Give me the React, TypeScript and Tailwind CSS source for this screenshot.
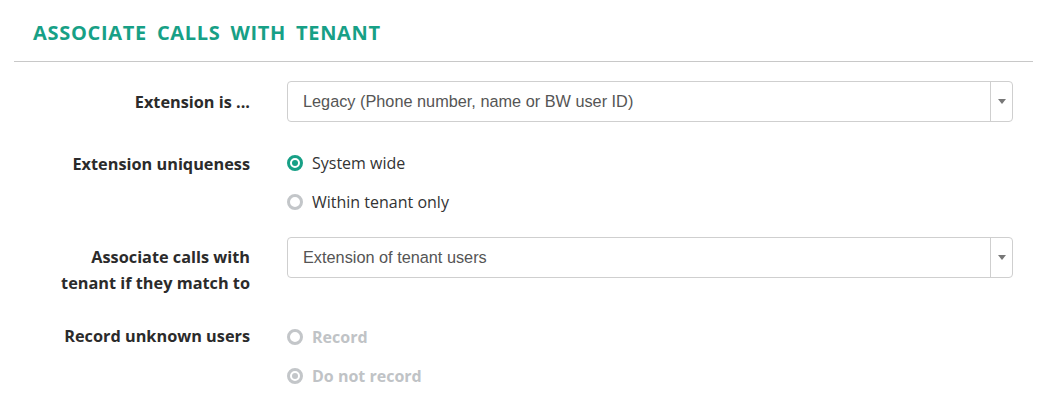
import React from 'react'

const TEAL = '#17a086'

function Radio({ checked, disabled, label }: { checked?: boolean; disabled?: boolean; label: string }) {
  const ring = disabled ? 'border-[#c3c6c9]' : checked ? 'border-[#17a086]' : 'border-[#c3c6c9]'
  return (
    <label className="flex h-6 items-center gap-[9px]">
      <span className={`flex h-4 w-4 items-center justify-center rounded-full border-[3px] bg-white ${ring}`}>
        {checked && (
          <span className={`h-[6px] w-[6px] rounded-full ${disabled ? 'bg-[#c3c6c9]' : 'bg-[#17a086]'}`} />
        )}
      </span>
      <span
        className={
          disabled
            ? 'text-[16px] font-bold text-[#c0c3c6]'
            : 'text-[16px] text-[#333]'
        }
      >
        {label}
      </span>
    </label>
  )
}

function Select({ value }: { value: string }) {
  return (
    <div className="flex h-[41px] shrink-0 items-stretch rounded-[4px] border border-[#cfcfcf] bg-white">
      <div className="flex flex-1 items-center pl-[15px] font-['Liberation_Sans',Arial,sans-serif] text-[16.3px] text-[#555]">
        {value}
      </div>
      <div className="flex w-[22px] items-center justify-center border-l border-[#cfcfcf]">
        <span className="h-0 w-0 border-x-[4px] border-t-[5px] border-x-transparent border-t-[#777]" />
      </div>
    </div>
  )
}

function Row({
  label,
  children,
  className,
  labelClass,
}: {
  label: React.ReactNode
  children: React.ReactNode
  className?: string
  labelClass?: string
}) {
  return (
    <div className={`flex ${className ?? ''}`}>
      <div
        className={`w-[236px] shrink-0 text-right text-[16.3px] font-bold leading-[26px] text-[#2b2b2b] ${labelClass ?? ''}`}
      >
        {label}
      </div>
      <div className="ml-[37px] flex flex-1 flex-col">{children}</div>
    </div>
  )
}

export default function App() {
  return (
    <div className="h-[419px] w-[1048px] bg-white font-['Open_Sans',sans-serif]">
      <div className="ml-[14px] mr-[15px]">
        <h2
          className="pl-[19px] pt-[19px] text-[20px] font-bold leading-[28px] tracking-[0.7px] [word-spacing:4px]"
          style={{ color: TEAL }}
        >
          ASSOCIATE CALLS WITH TENANT
        </h2>
        <div className="mt-[14px] border-t border-[#c8c8c8]" />

        <div className="pr-[20px]">
          <Row label="Extension is ..." className="mt-[19px] items-center">
            <Select value="Legacy (Phone number, name or BW user ID)" />
          </Row>

          <Row label="Extension uniqueness" className="mt-[29px]">
            <div className="flex flex-col gap-[15px]">
              <Radio checked label="System wide" />
              <Radio label="Within tenant only" />
            </div>
          </Row>

          <Row
            label={
              <>
                Associate calls with
                <br />
                tenant if they match to
              </>
            }
            className="mt-[23px]"
            labelClass="pt-[7px]"
          >
            <Select value="Extension of tenant users" />
          </Row>

          <Row label="Record unknown users" className="mt-[29px]" labelClass="-mt-[2px]">
            <div className="flex flex-col gap-[15px]">
              <Radio disabled label="Record" />
              <Radio disabled checked label="Do not record" />
            </div>
          </Row>
        </div>
      </div>
    </div>
  )
}
